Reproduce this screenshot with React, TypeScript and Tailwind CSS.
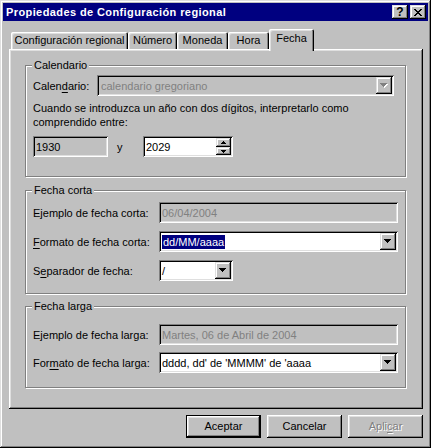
import React from "react";

const FONT = "font-['Liberation_Sans',Arial,sans-serif]";
const WINDOW =
  "shadow-[inset_-1px_-1px_0_#000000,inset_1px_1px_0_#dfdfdf,inset_-2px_-2px_0_#808080,inset_2px_2px_0_#ffffff]";
const PANEL =
  "shadow-[inset_-1px_-1px_0_#000000,inset_1px_1px_0_#ffffff,inset_-2px_-2px_0_#808080,inset_2px_2px_0_#dfdfdf]";
const PUSH =
  "shadow-[inset_-1px_-1px_0_#000000,inset_1px_1px_0_#ffffff,inset_-2px_-2px_0_#808080,inset_2px_2px_0_#dfdfdf]";
const RAISED =
  "shadow-[inset_-1px_-1px_0_#000000,inset_1px_1px_0_#dfdfdf,inset_-2px_-2px_0_#808080,inset_2px_2px_0_#ffffff]";
const SUNKEN =
  "shadow-[inset_1px_1px_0_#808080,inset_-1px_-1px_0_#ffffff,inset_2px_2px_0_#000000,inset_-2px_-2px_0_#dfdfdf]";
const ETCH = "shadow-[inset_1px_1px_0_#ffffff,1px_1px_0_#ffffff]";
const TAB =
  "shadow-[inset_1px_1px_0_#ffffff,inset_-1px_0_0_#000000,inset_-2px_0_0_#808080,inset_2px_2px_0_#dfdfdf]";

function ArrowShape({ fill, dx, dy }: { fill: string; dx: number; dy: number }) {
  return (
    <g fill={fill} transform={`translate(${dx} ${dy})`}>
      <rect x="0" y="0" width="7" height="1" />
      <rect x="1" y="1" width="5" height="1" />
      <rect x="2" y="2" width="3" height="1" />
      <rect x="3" y="3" width="1" height="1" />
    </g>
  );
}

function DropArrow({ disabled }: { disabled?: boolean }) {
  return (
    <svg width="8" height="5" viewBox="0 0 8 5" shapeRendering="crispEdges">
      {disabled && <ArrowShape fill="#ffffff" dx={1} dy={1} />}
      <ArrowShape fill={disabled ? "#808080" : "#000000"} dx={0} dy={0} />
    </svg>
  );
}

function SpinArrow({ up }: { up?: boolean }) {
  return (
    <svg width="5" height="3" viewBox="0 0 5 3" shapeRendering="crispEdges">
      {up ? (
        <g fill="#000000">
          <rect x="2" y="0" width="1" height="1" />
          <rect x="1" y="1" width="3" height="1" />
          <rect x="0" y="2" width="5" height="1" />
        </g>
      ) : (
        <g fill="#000000">
          <rect x="0" y="0" width="5" height="1" />
          <rect x="1" y="1" width="3" height="1" />
          <rect x="2" y="2" width="1" height="1" />
        </g>
      )}
    </svg>
  );
}

function CloseGlyph() {
  const rows: [number, number][][] = [
    [[0, 2], [6, 2]],
    [[1, 2], [5, 2]],
    [[2, 4]],
    [[3, 2]],
    [[2, 4]],
    [[1, 2], [5, 2]],
    [[0, 2], [6, 2]],
  ];
  return (
    <svg width="8" height="7" viewBox="0 0 8 7" shapeRendering="crispEdges">
      {rows.map((r, y) =>
        r.map(([x, w], i) => <rect key={`${y}-${i}`} x={x} y={y} width={w} height="1" fill="#000000" />)
      )}
    </svg>
  );
}

function Combo({
  className,
  text,
  disabled,
  selected,
}: {
  className: string;
  text: string;
  disabled?: boolean;
  selected?: boolean;
}) {
  return (
    <div className={`${SUNKEN} flex h-[21px] p-[2px] ${disabled ? "bg-[#c0c0c0]" : "bg-white"} ${className}`}>
      <div className={`flex flex-1 items-center ${disabled ? "text-[#808080] pl-[2px]" : "pl-[1px]"}`}>
        {selected ? (
          <span className="bg-[#000080] px-[1px] leading-[14px] text-white">{text}</span>
        ) : (
          <span className="leading-[14px]">{text}</span>
        )}
      </div>
      <div className={`flex h-full w-[16px] items-center justify-center bg-[#c0c0c0] ${RAISED}`}>
        <DropArrow disabled={disabled} />
      </div>
    </div>
  );
}

function Edit({ className, text, gray }: { className: string; text: string; gray?: boolean }) {
  return (
    <div
      className={`${SUNKEN} flex h-[21px] items-center bg-[#c0c0c0] px-[3px] leading-[14px] ${
        gray ? "text-[#808080]" : "text-black"
      } ${className}`}
    >
      {text}
    </div>
  );
}

function Group({
  title,
  className,
  children,
}: {
  title: string;
  className: string;
  children: React.ReactNode;
}) {
  return (
    <div className={`relative w-[381px] border border-[#808080] ${ETCH} ${className}`}>
      <span className="absolute left-[6px] top-[-8px] bg-[#c0c0c0] px-[2px] leading-[14px]">{title}</span>
      {children}
    </div>
  );
}

function Row({ label, children }: { label: React.ReactNode; children: React.ReactNode }) {
  return (
    <div className="flex h-[21px] items-center">
      <span className="w-[126px] leading-[14px]">{label}</span>
      {children}
    </div>
  );
}

function U({ children }: { children: React.ReactNode }) {
  return <span className="underline underline-offset-[2px]">{children}</span>;
}

export default function App() {
  return (
    <div
      className={`flex h-[448px] w-[431px] flex-col bg-[#c0c0c0] p-[3px] text-[11px] text-black ${WINDOW} ${FONT}`}
    >
      {/* Title bar */}
      <div className="flex h-[18px] items-center justify-between bg-[#000080] pl-[3px] pr-[2px]">
        <span className="text-[11px] font-bold leading-[14px] tracking-[0.4px] text-white">
          Propiedades de Configuración regional
        </span>
        <div className="flex gap-[2px]">
          <div className={`flex h-[14px] w-[16px] items-center justify-center bg-[#c0c0c0] ${RAISED}`}>
            <span className="text-[12px] font-bold leading-[12px]">?</span>
          </div>
          <div className={`flex h-[14px] w-[16px] items-center justify-center bg-[#c0c0c0] ${RAISED}`}>
            <CloseGlyph />
          </div>
        </div>
      </div>

      {/* Tabs */}
      <div className="ml-[6px] mt-[8px] flex h-[20px] items-end pl-[2px]">
        <div className={`flex h-[17px] w-[117px] items-center justify-center rounded-t-[2px] ${TAB}`}>
          Configuración regional
        </div>
        <div className={`flex h-[17px] w-[49px] items-center justify-center rounded-t-[2px] ${TAB}`}>Número</div>
        <div className={`flex h-[17px] w-[51px] items-center justify-center rounded-t-[2px] ${TAB}`}>Moneda</div>
        <div className={`flex h-[17px] w-[41px] items-center justify-center rounded-t-[2px] ${TAB}`}>Hora</div>
        <div
          className={`relative z-10 -mb-[2px] flex h-[22px] w-[45px] items-center justify-center rounded-t-[2px] bg-[#c0c0c0] pb-[3px] ${TAB}`}
        >
          Fecha
        </div>
      </div>

      {/* Panel */}
      <div className={`ml-[6px] h-[360px] w-[414px] pl-[16px] pt-[16px] ${PANEL}`}>
        <Group title="Calendario" className="h-[112px]">
          <div className="px-[7px] pt-[9px]">
            <div className="flex h-[21px] items-center">
              <span className="w-[64px] leading-[14px]">
                Calen<U>d</U>ario:
              </span>
              <Combo className="w-[297px]" text="calendario gregoriano" disabled />
            </div>
            <div className="mt-[5px] leading-[14px]">
              <div className="whitespace-nowrap">Cuando se introduzca un año con dos dígitos, interpretarlo como</div>
              <div className="whitespace-nowrap">comprendido entre:</div>
            </div>
            <div className="mt-[7px] flex h-[21px] items-center">
              <Edit className="w-[75px]" text="1930" />
              <span className="ml-[9px] w-[26px] leading-[14px]">y</span>
              <div className={`${SUNKEN} flex h-[21px] w-[90px] bg-white p-[2px]`}>
                <div className="flex flex-1 items-center pl-[1px] leading-[14px]">2029</div>
                <div className="flex w-[15px] flex-col">
                  <div className={`flex h-[9px] items-center justify-center bg-[#c0c0c0] ${RAISED}`}>
                    <SpinArrow up />
                  </div>
                  <div className={`flex h-[8px] items-center justify-center bg-[#c0c0c0] ${RAISED}`}>
                    <SpinArrow />
                  </div>
                </div>
              </div>
            </div>
          </div>
        </Group>

        <Group title="Fecha corta" className="mt-[13px] h-[104px]">
          <div className="flex flex-col gap-[8px] px-[7px] pt-[11px]">
            <Row label="Ejemplo de fecha corta:">
              <Edit className="w-[239px]" text="06/04/2004" gray />
            </Row>
            <Row
              label={
                <>
                  <U>F</U>ormato de fecha corta:
                </>
              }
            >
              <Combo className="w-[239px]" text="dd/MM/aaaa" selected />
            </Row>
            <Row
              label={
                <>
                  S<U>e</U>parador de fecha:
                </>
              }
            >
              <Combo className="w-[74px]" text="/" />
            </Row>
          </div>
        </Group>

        <Group title="Fecha larga" className="mt-[12px] h-[82px]">
          <div className="flex flex-col gap-[7px] px-[7px] pt-[17px]">
            <Row label="Ejemplo de fecha larga:">
              <Edit className="w-[239px]" text="Martes, 06 de Abril de 2004" gray />
            </Row>
            <Row
              label={
                <>
                  For<U>m</U>ato de fecha larga:
                </>
              }
            >
              <Combo className="w-[239px]" text="dddd, dd' de 'MMMM' de 'aaaa" />
            </Row>
          </div>
        </Group>
      </div>

      {/* Buttons */}
      <div className="ml-[6px] mt-[6px] flex w-[414px] justify-end gap-[6px]">
        <div className={`flex h-[23px] w-[75px] items-center justify-center border border-black bg-[#c0c0c0] ${PUSH}`}>
          Aceptar
        </div>
        <div className={`flex h-[23px] w-[75px] items-center justify-center bg-[#c0c0c0] ${PUSH}`}>Cancelar</div>
        <div
          className={`flex h-[23px] w-[75px] items-center justify-center bg-[#c0c0c0] text-[#808080] [text-shadow:1px_1px_0_#ffffff] ${PUSH}`}
        >
          Apli<U>c</U>ar
        </div>
      </div>
    </div>
  );
}
